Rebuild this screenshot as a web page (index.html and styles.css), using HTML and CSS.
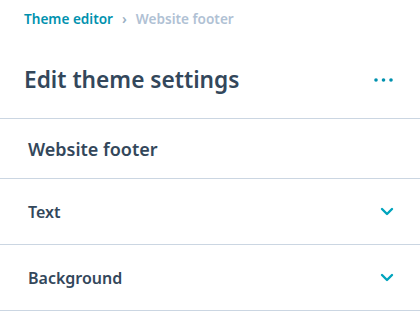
FILE: index.html
```html
<!DOCTYPE html>
<html lang="en">
<head>
    <meta charset="UTF-8">
    <title>Edit theme settings</title>
    <link rel="stylesheet" href="styles.css">
</head>
<body>
    <div class="panel">
        <nav class="crumbs">
            <a class="crumb-link" href="#">Theme editor</a>
            <span class="crumb-sep">&#x203A;</span>
            <span class="crumb-current">Website footer</span>
        </nav>
        <div class="header">
            <h1>Edit theme settings</h1>
            <button class="more" aria-label="More">
                <svg width="19" height="4" viewBox="0 0 19 4">
                    <circle cx="2" cy="2" r="1.8"/>
                    <circle cx="9.5" cy="2" r="1.8"/>
                    <circle cx="17" cy="2" r="1.8"/>
                </svg>
            </button>
        </div>
        <div class="group-title">Website footer</div>
        <div class="row">
            <span>Text</span>
            <svg class="chevron" width="14" height="9" viewBox="0 0 14 9"><path d="M2 2l5 5 5-5"/></svg>
        </div>
        <div class="row">
            <span>Background</span>
            <svg class="chevron" width="14" height="9" viewBox="0 0 14 9"><path d="M2 2l5 5 5-5"/></svg>
        </div>
    </div>
</body>
</html>
```

FILE: styles.css
```css
body {
    margin: 0;
    background: #fff;
    font-family: "Noto Sans", sans-serif;
    color: #33475b;
}
.panel {
    width: 420px;
}
.crumbs {
    padding: 10px 24px 0;
    font-size: 13.6px;
    line-height: 18px;
    font-weight: 600;
    display: flex;
    align-items: center;
    gap: 9px;
}
.crumb-link {
    color: #0091ae;
    text-decoration: none;
}
.crumb-sep {
    color: #99afc4;
    font-size: 14px;
}
.crumb-current {
    color: #b0c1d4;
}
.header {
    display: flex;
    align-items: center;
    justify-content: space-between;
    padding: 38px 27px 24px 24px;
    border-bottom: 1px solid #cbd6e2;
}
h1 {
    margin: 0;
    font-size: 22.7px;
    line-height: 28px;
    font-weight: 600;
}
.more {
    border: 0;
    background: none;
    padding: 0;
    display: flex;
    fill: #0091ae;
}
.group-title {
    height: 59px;
    display: flex;
    align-items: center;
    padding: 0 28px;
    font-size: 18px;
    font-weight: 600;
    border-bottom: 1px solid #cbd6e2;
}
.row {
    height: 65px;
    display: flex;
    align-items: center;
    justify-content: space-between;
    padding: 0 26px 0 28px;
    font-size: 16px;
    font-weight: 600;
    border-bottom: 1px solid #cbd6e2;
}
.chevron {
    fill: none;
    stroke: #00a4bd;
    stroke-width: 2.4;
    stroke-linecap: round;
    stroke-linejoin: round;
}
```
